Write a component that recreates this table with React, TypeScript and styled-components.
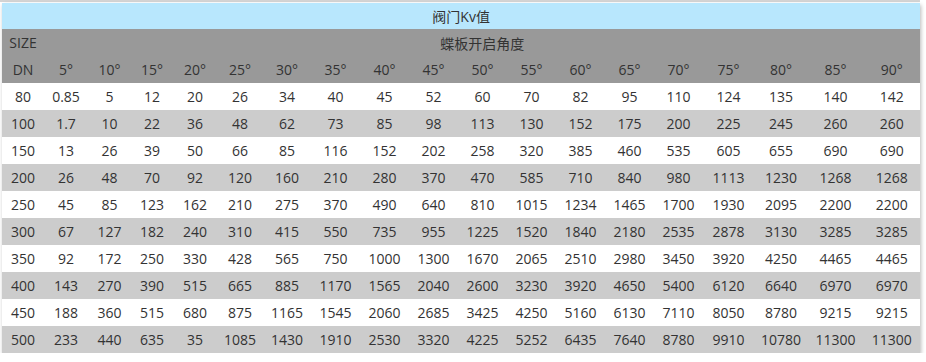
import React from 'react';
import styled, { createGlobalStyle } from 'styled-components';

const GlobalStyle = createGlobalStyle`
  html, body {
    margin: 0;
    padding: 0;
    background: #ffffff;
  }
  body {
    font-family: "Open Sans", "Noto Sans CJK SC", sans-serif;
  }
`;

const ANGLES = [5, 10, 15, 20, 25, 30, 35, 40, 45, 50, 55, 60, 65, 70, 75, 80, 85, 90];
const COL_WIDTHS = [42, 44, 43, 42, 44, 46, 48, 49, 49, 49, 49, 49, 49, 49, 49, 51, 54, 55, 57];

const ROWS: (string | number)[][] = [
  [80, 0.85, 5, 12, 20, 26, 34, 40, 45, 52, 60, 70, 82, 95, 110, 124, 135, 140, 142],
  [100, 1.7, 10, 22, 36, 48, 62, 73, 85, 98, 113, 130, 152, 175, 200, 225, 245, 260, 260],
  [150, 13, 26, 39, 50, 66, 85, 116, 152, 202, 258, 320, 385, 460, 535, 605, 655, 690, 690],
  [200, 26, 48, 70, 92, 120, 160, 210, 280, 370, 470, 585, 710, 840, 980, 1113, 1230, 1268, 1268],
  [250, 45, 85, 123, 162, 210, 275, 370, 490, 640, 810, 1015, 1234, 1465, 1700, 1930, 2095, 2200, 2200],
  [300, 67, 127, 182, 240, 310, 415, 550, 735, 955, 1225, 1520, 1840, 2180, 2535, 2878, 3130, 3285, 3285],
  [350, 92, 172, 250, 330, 428, 565, 750, 1000, 1300, 1670, 2065, 2510, 2980, 3450, 3920, 4250, 4465, 4465],
  [400, 143, 270, 390, 515, 665, 885, 1170, 1565, 2040, 2600, 3230, 3920, 4650, 5400, 6120, 6640, 6970, 6970],
  [450, 188, 360, 515, 680, 875, 1165, 1545, 2060, 2685, 3425, 4250, 5160, 6130, 7110, 8050, 8780, 9215, 9215],
  [500, 233, 440, 635, 35, 1085, 1430, 1910, 2530, 3320, 4225, 5252, 6435, 7640, 8780, 9910, 10780, 11300, 11300],
];

const Frame = styled.div`
  border-top: 2px solid #d4d4d4;
  padding: 1px 0 0 2px;
  width: 918px;
`;

const Table = styled.table`
  width: 918px;
  table-layout: fixed;
  border-collapse: collapse;
  border-spacing: 0;
  box-shadow: 1px 2px 4px rgba(0, 0, 0, 0.28);
  color: #333333;
  font-size: 14px;
`;

const TitleCell = styled.th`
  height: 26px;
  padding: 0;
  background: #b8e7fd;
  font-weight: normal;
  text-align: center;
`;

const HeadRow = styled.tr`
  background: #999999;
`;

const HeadCell = styled.th`
  height: 27px;
  padding: 0;
  font-weight: normal;
  text-align: center;
  white-space: nowrap;
`;

const BodyRow = styled.tr<{ $shade: boolean }>`
  background: ${(p) => (p.$shade ? '#cccccc' : '#ffffff')};
`;

const Cell = styled.td`
  height: 27px;
  padding: 0;
  text-align: center;
  white-space: nowrap;
`;

export default function App() {
  return (
    <>
      <GlobalStyle />
      <Frame>
        <Table>
          <colgroup>
            {COL_WIDTHS.map((w, i) => (
              <col key={i} style={{ width: w }} />
            ))}
          </colgroup>
          <thead>
            <tr>
              <TitleCell colSpan={19}>阀门Kv值</TitleCell>
            </tr>
            <HeadRow>
              <HeadCell>SIZE</HeadCell>
              <HeadCell colSpan={18}>蝶板开启角度</HeadCell>
            </HeadRow>
            <HeadRow>
              <HeadCell>DN</HeadCell>
              {ANGLES.map((a) => (
                <HeadCell key={a}>{a}°</HeadCell>
              ))}
            </HeadRow>
          </thead>
          <tbody>
            {ROWS.map((row, i) => (
              <BodyRow key={i} $shade={i % 2 === 1}>
                {row.map((v, j) => (
                  <Cell key={j}>{v}</Cell>
                ))}
              </BodyRow>
            ))}
          </tbody>
        </Table>
      </Frame>
    </>
  );
}
